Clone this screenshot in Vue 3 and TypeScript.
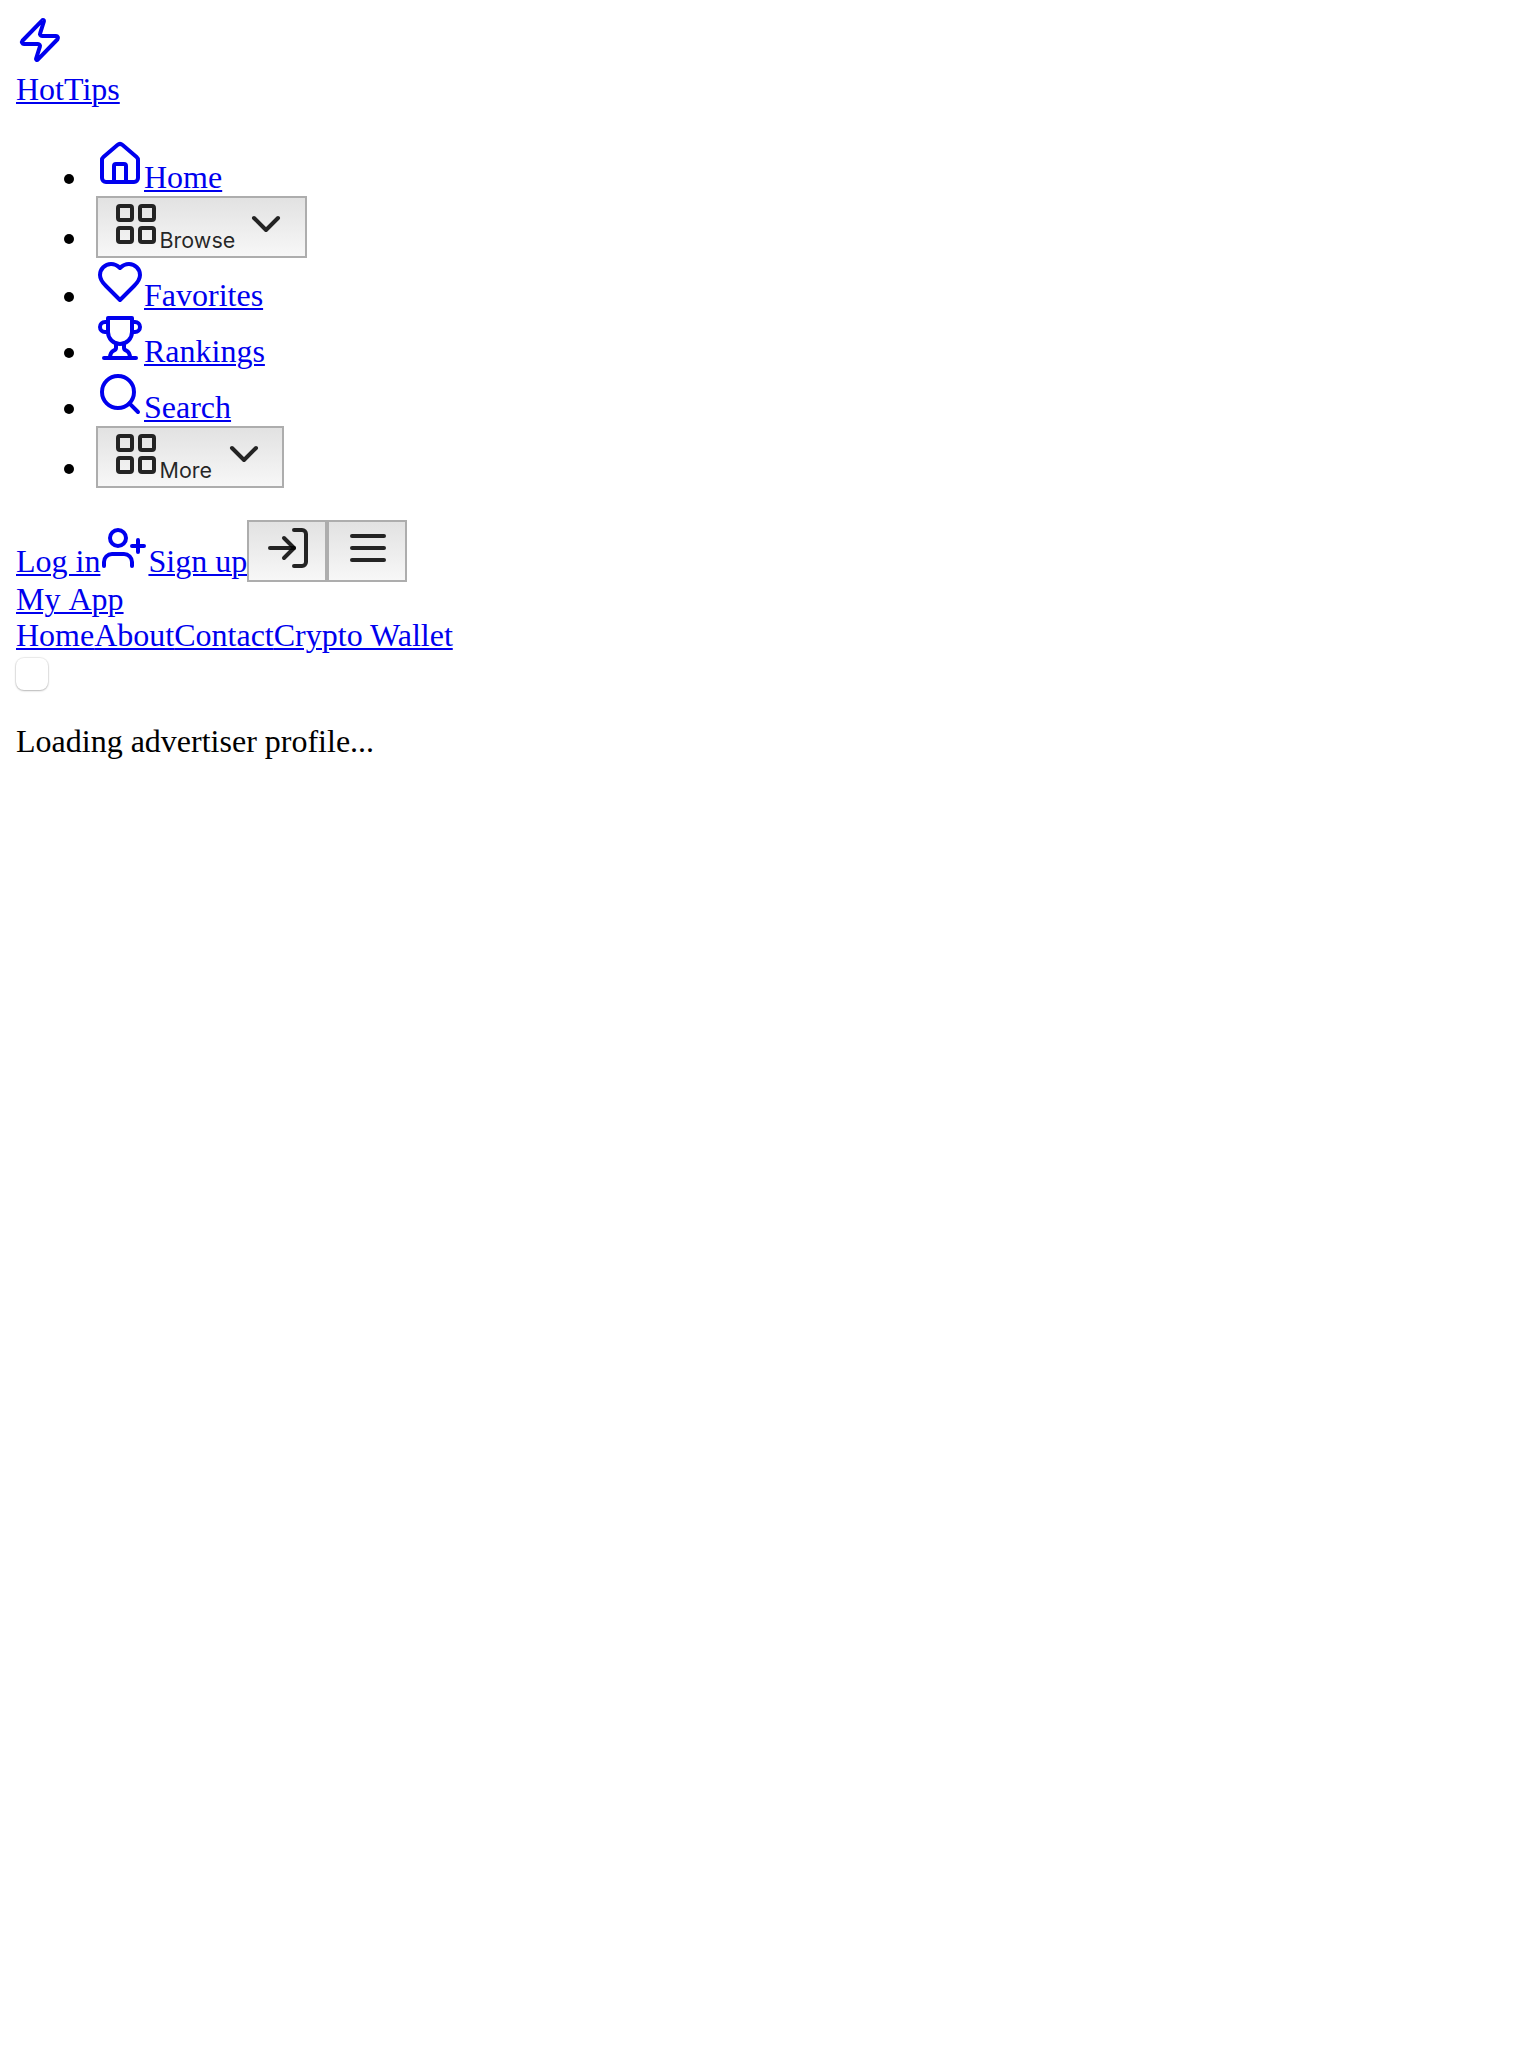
<script setup lang="ts">
import { h } from 'vue'
import type { FunctionalComponent } from 'vue'

type Shape = [string, Record<string, string | number>]

const icons: Record<string, Shape[]> = {
  zap: [['path', { d: 'M4 14a1 1 0 0 1-.78-1.63l9.9-10.2a.5.5 0 0 1 .86.46l-1.92 6.02A1 1 0 0 0 13 10h7a1 1 0 0 1 .78 1.63l-9.9 10.2a.5.5 0 0 1-.86-.46l1.92-6.02A1 1 0 0 0 11 14z' }]],
  home: [
    ['path', { d: 'M15 21v-8a1 1 0 0 0-1-1h-4a1 1 0 0 0-1 1v8' }],
    ['path', { d: 'M3 10a2 2 0 0 1 .709-1.528l7-5.999a2 2 0 0 1 2.582 0l7 5.999A2 2 0 0 1 21 10v9a2 2 0 0 1-2 2H5a2 2 0 0 1-2-2z' }],
  ],
  grid: [
    ['rect', { x: 3, y: 3, width: 7, height: 7, rx: 1 }],
    ['rect', { x: 14, y: 3, width: 7, height: 7, rx: 1 }],
    ['rect', { x: 14, y: 14, width: 7, height: 7, rx: 1 }],
    ['rect', { x: 3, y: 14, width: 7, height: 7, rx: 1 }],
  ],
  chevron: [['path', { d: 'm6 9 6 6 6-6' }]],
  heart: [['path', { d: 'M19 14c1.49-1.46 3-3.21 3-5.5A5.5 5.5 0 0 0 16.5 3c-1.76 0-3 .5-4.5 2-1.5-1.5-2.74-2-4.5-2A5.5 5.5 0 0 0 2 8.5c0 2.3 1.5 4.05 3 5.5l7 7Z' }]],
  trophy: [
    ['path', { d: 'M6 9H4.5a2.5 2.5 0 0 1 0-5H6' }],
    ['path', { d: 'M18 9h1.5a2.5 2.5 0 0 0 0-5H18' }],
    ['path', { d: 'M4 22h16' }],
    ['path', { d: 'M10 14.66V17c0 .55-.47.98-.97 1.21C7.85 18.75 7 20.24 7 22' }],
    ['path', { d: 'M14 14.66V17c0 .55.47.98.97 1.21C16.15 18.75 17 20.24 17 22' }],
    ['path', { d: 'M18 2H6v7a6 6 0 0 0 12 0V2Z' }],
  ],
  search: [['circle', { cx: 11, cy: 11, r: 8 }], ['path', { d: 'm21 21-4.3-4.3' }]],
  userPlus: [
    ['path', { d: 'M16 21v-2a4 4 0 0 0-4-4H6a4 4 0 0 0-4 4v2' }],
    ['circle', { cx: 9, cy: 7, r: 4 }],
    ['path', { d: 'M19 8v6M22 11h-6' }],
  ],
  logIn: [
    ['path', { d: 'M15 3h4a2 2 0 0 1 2 2v14a2 2 0 0 1-2 2h-4' }],
    ['polyline', { points: '10 17 15 12 10 7' }],
    ['line', { x1: 15, x2: 3, y1: 12, y2: 12 }],
  ],
  menu: [
    ['line', { x1: 4, x2: 20, y1: 12, y2: 12 }],
    ['line', { x1: 4, x2: 20, y1: 6, y2: 6 }],
    ['line', { x1: 4, x2: 20, y1: 18, y2: 18 }],
  ],
}

const Icon: FunctionalComponent<{ name: string }> = (props) =>
  h(
    'svg',
    {
      width: 48,
      height: 48,
      viewBox: '0 0 24 24',
      fill: 'none',
      stroke: 'currentColor',
      'stroke-width': 2,
      'stroke-linecap': 'round',
      'stroke-linejoin': 'round',
    },
    icons[props.name].map(([tag, attrs]) => h(tag, attrs)),
  )
Icon.props = ['name']

interface NavItem {
  label: string
  icon: string
  menu?: boolean
}

const items: NavItem[] = [
  { label: 'Home', icon: 'home' },
  { label: 'Browse', icon: 'grid', menu: true },
  { label: 'Favorites', icon: 'heart' },
  { label: 'Rankings', icon: 'trophy' },
  { label: 'Search', icon: 'search' },
  { label: 'More', icon: 'grid', menu: true },
]
const pages = ['Home', 'About', 'Contact', 'Crypto Wallet']
</script>

<template>
  <div class="page">
    <header>
      <a href="#" class="brand"><div class="logo"><Icon name="zap" /></div><span>HotTips</span></a>
      <ul>
        <li v-for="item in items" :key="item.label">
          <button v-if="item.menu" :class="item.label.toLowerCase()"><Icon :name="item.icon" /><span class="label">{{ item.label }}</span><Icon name="chevron" /></button>
          <a v-else href="#"><Icon :name="item.icon" />{{ item.label }}</a>
        </li>
      </ul>
      <div class="account"><a href="#">Log in</a><a href="#"><Icon name="userPlus" />Sign up</a><button class="square" aria-label="Log in"><Icon name="logIn" /></button><button class="square" aria-label="Menu"><Icon name="menu" /></button></div>
    </header>
    <nav>
      <div class="line title"><a href="#">My App</a></div>
      <div class="line"><a v-for="page in pages" :key="page" href="#">{{ page }}</a></div>
      <div class="toggle"><input type="checkbox" aria-label="Toggle menu" /></div>
    </nav>
    <p>Loading advertiser profile...</p>
  </div>
</template>

<style>
body {
  background: #fff;
}
</style>

<style scoped>
.page {
  padding: 16px;
  font: 32px/36px "Liberation Serif", "Times New Roman", serif;
  color: #000;
}
a {
  color: #0000ee;
  text-decoration: underline;
  text-decoration-thickness: 2px;
  text-underline-offset: 2px;
}
.brand {
  display: block;
}
.brand span {
  display: block;
  width: max-content;
}
.brand span,
.line,
p {
  height: 36px;
  line-height: 34px;
}
.title {
  font-kerning: none;
}
.logo {
  height: 56px;
}
.page :deep(svg) {
  vertical-align: baseline;
  overflow: hidden;
}
ul {
  list-style: none;
  margin: 32px 0;
  padding: 0 0 0 80px;
}
li {
  height: 56px;
  white-space: nowrap;
}
li:has(button) {
  height: 62px;
}
li::before {
  content: "";
  display: inline-block;
  width: 10px;
  height: 10px;
  margin: 0 22px 0 -32px;
  border-radius: 50%;
  background: #000;
  vertical-align: 4px;
}
button {
  display: inline-flex;
  align-items: baseline;
  box-sizing: border-box;
  height: 62px;
  margin: 0;
  padding: 2px 14px;
  border: 2px solid #adadad;
  border-radius: 0;
  background: linear-gradient(#e2e2e2, #f7f7f7);
  color: rgba(0, 0, 0, 0.85);
  font: 21.5px/26px Inter, sans-serif;
  text-align: left;
}
.square {
  padding: 2px 13px 2px 15px;
}
.browse {
  padding-right: 15px;
}
.label {
  text-indent: -0.5px;
}
.browse .label {
  width: 82px;
}
.more .label {
  width: 60px;
}
.account {
  height: 62px;
  white-space: nowrap;
}
.toggle {
  height: 38px;
}
input {
  appearance: none;
  display: block;
  box-sizing: border-box;
  width: 32px;
  height: 32px;
  margin: 0;
  border-radius: 8px;
  background: #fff;
  box-shadow: 0 0 1px 1px rgba(0, 0, 0, 0.08), 0 1px 2px rgba(0, 0, 0, 0.22);
  position: relative;
  top: 4px;
}
p {
  margin: 32px 0;
}
</style>
